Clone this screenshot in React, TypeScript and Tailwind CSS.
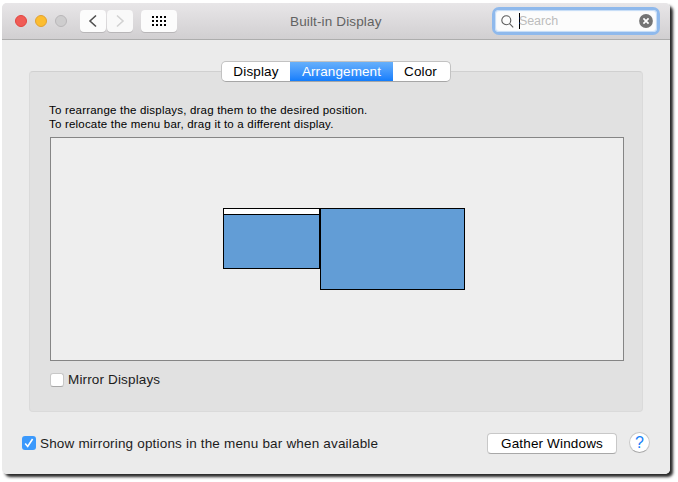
import React from "react";

const softEdge = "border border-[#c8c8c8] border-b-[#a8a8a8]";

function TitleBar() {
  return (
    <header className="flex h-[37px] items-start border-b border-[#adadad] bg-gradient-to-b from-[#e8e6e8] to-[#d1cfd1]">
      <div className="mt-[12px] ml-[13px] flex gap-2">
        <span className="size-3 rounded-full border border-[#e2443f] bg-[#f05c56]" />
        <span className="size-3 rounded-full border border-[#e2a130] bg-[#fcbd30]" />
        <span className="size-3 rounded-full border border-[#b9b7b9] bg-[#cecdce]" />
      </div>
      <div className="mt-[7px] ml-[13px] flex gap-px">
        <span className="flex h-[22px] w-[26px] items-center justify-center rounded-[4px] bg-[#fcfcfc] shadow-[0_1px_0_#b8b6b8]">
          <svg width="10" height="14" viewBox="0 0 10 14" fill="none" stroke="#505050" strokeWidth="1.6"><path d="M8 1.500 2 7l6 5.500" /></svg>
        </span>
        <span className="flex h-[22px] w-[26px] items-center justify-center rounded-[4px] bg-[#f9f9f9] shadow-[0_1px_0_#b8b6b8]">
          <svg width="10" height="14" viewBox="0 0 10 14" fill="none" stroke="#d2d2d2" strokeWidth="1.6"><path d="m2 1.500 6 5.500-6 5.500" /></svg>
        </span>
      </div>
      <div className="mt-[7px] ml-[8px] flex h-[22px] w-[36px] items-center justify-center rounded-[4px] bg-[#fcfcfc] shadow-[0_1px_0_#b8b6b8]">
        <div className="grid grid-cols-4 gap-[2px]">
          {Array.from({ length: 12 }, (_, i) => (
            <span key={i} className="size-[2px] bg-black" />
          ))}
        </div>
      </div>
      <h1 className="mt-[10px] ml-[113px] w-[204px] whitespace-nowrap text-[13.5px] leading-[17px] tracking-[0.14px] text-[#626262]">Built-in Display</h1>
      <div className="mt-[7px] ml-px flex h-[22px] w-[162px] items-center rounded-[4px] bg-[#fcfcfc] shadow-[0_0_0_3px_#8fb9ec,inset_0_0_1px_1px_#c3dbf7]">
        <svg className="ml-[6px]" width="13" height="13" viewBox="0 0 13 13" fill="none" stroke="#5c5c5c" strokeWidth="1.1"><circle cx="5.300" cy="5.300" r="4.500" /><path d="m8.600 8.600 3.600 3.700" /></svg>
        <span className="ml-[5px] h-4 w-px bg-black" />
        <span className="-ml-px w-[42px] text-[12.5px] leading-4 tracking-[-0.1px] text-[#bdbdbd]">Search</span>
        <svg className="mr-[4px] ml-auto" width="14" height="14" viewBox="0 0 14 14"><circle cx="7" cy="7" r="6.900" fill="#747474" /><path d="m4.400 4.400 5.200 5.200m0-5.200-5.200 5.200" stroke="#fff" strokeWidth="1.700" /></svg>
      </div>
    </header>
  );
}

function Tabs() {
  return (
    <div className="relative z-10 -mb-[11px] ml-[219px] flex h-[21px] w-[230px] overflow-hidden rounded-[5px] border border-[#c2c2c2] border-b-[#a6a6a6] bg-white text-[13.5px] leading-[19px] text-black">
      <span className="w-[68px] text-center tracking-[0.15px]">Display</span>
      <span className="-my-px h-[21px] w-[103px] border-y border-t-[#50a5f5] border-b-[#1171e6] bg-gradient-to-b from-[#66b0fb] to-[#117dfc] text-center tracking-[0.1px] text-white">Arrangement</span>
      <span className="w-[57px] pr-[2px] text-center tracking-[0.15px]">Color</span>
    </div>
  );
}

export default function App() {
  return (
    <div className="h-[482px] w-[678px] overflow-hidden bg-white pt-[3px] pl-[2px] font-['Liberation_Sans',Arial,sans-serif]">
      <div className="h-[471px] w-[668px] rounded-[5px] shadow-[3px_3px_3px_0px_rgba(0,0,0,0.85)]">
        <div className="h-full overflow-hidden rounded-[5px] bg-[#ebebeb]">
          <TitleBar />
          <main className="pt-[21px]">
            <Tabs />
            <section className="ml-[27px] h-[341px] w-[614px] rounded-[4px] border border-[#dadada] border-t-[#d0d0d0] bg-[#e1e1e1] pt-[31px]">
              <p className="ml-[19px] whitespace-nowrap text-[11.500px] leading-[14px] tracking-[0.2px] text-black">
                To rearrange the displays, drag them to the desired position.
                <br />
                To relocate the menu bar, drag it to a different display.
              </p>
              <div className="mt-[6px] ml-[20px] flex h-[224px] w-[574px] items-start border border-[#858585] bg-[#eeeeee] pt-[70px] pl-[172px]">
                <div className="h-[61px] w-[97px] border border-black bg-[#629dd6]">
                  <div className="h-[6px] border-b border-black bg-white" />
                </div>
                <div className="h-[82px] w-[145px] border border-black bg-[#629dd6]" />
              </div>
              <label className="mt-[10px] ml-[20px] flex items-center text-[13.5px] leading-[17px] text-[#1c1c1c]">
                <span className={`size-[14px] rounded-[3px] bg-white ${softEdge}`} />
                <span className="ml-[4px] tracking-[0.15px]">Mirror Displays</span>
              </label>
            </section>
            <footer className="mt-[20px] flex h-[22px] items-center text-[13.5px] text-[#1c1c1c]">
              <span className="ml-[20px] flex size-[14px] items-center justify-center rounded-[3px] bg-[#3b99fc]">
                <svg width="12" height="12" viewBox="0 0 12 12" fill="none" stroke="#fff" strokeWidth="1.600"><path d="m2.200 6.500 2.500 2.900L9.600 2" /></svg>
              </span>
              <span className="ml-[4px] w-[447px] whitespace-nowrap pt-[2px] tracking-[0.18px]">Show mirroring options in the menu bar when available</span>
              <button className={`h-[21px] w-[130px] rounded-[4px] bg-white leading-[19px] tracking-[0.15px] text-black ${softEdge}`}>Gather Windows</button>
              <button className={`-mt-px ml-[12px] size-[21px] rounded-full bg-white text-[16px] leading-[19px] text-[#1681f8] ${softEdge}`}>?</button>
            </footer>
          </main>
        </div>
      </div>
    </div>
  );
}
